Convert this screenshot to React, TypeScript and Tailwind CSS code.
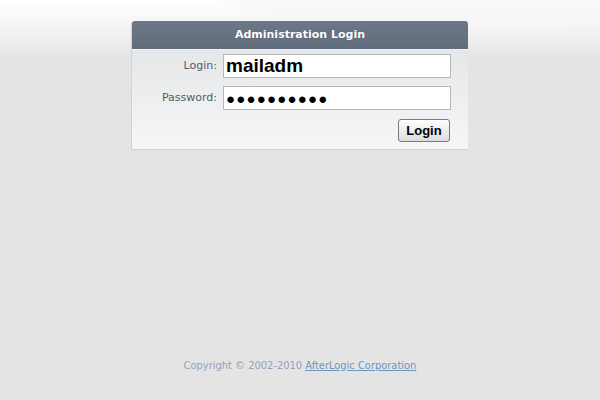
export default function App() {
  return (
    <div className="relative flex h-[400px] w-[600px] flex-col items-center overflow-hidden bg-[#e4e4e4] font-['DejaVu_Sans',sans-serif]">
      <div className="pointer-events-none absolute inset-x-0 top-0 h-[60px] bg-gradient-to-b from-white via-[#f3f3f3] to-[#e4e4e4]" />
      <div className="pointer-events-none absolute right-[-120px] top-[-70px] h-[100px] w-[520px] rounded-[50%] bg-gradient-to-b from-transparent to-[#f6f6f6] opacity-70" />

      <div className="relative mt-[21px] w-[336px] shadow-[-1px_1px_0_#d2d2d2]">
        <div className="flex h-[28px] items-center justify-center rounded-t-[3px] bg-gradient-to-b from-[#6c7788] to-[#616c7d] text-[11px] font-bold text-white [text-shadow:0_0_1px_#4a5363]">
          Administration Login
        </div>
        <div className="border-t border-[#f0f1f2] bg-gradient-to-b from-[#e6e7e9] to-[#f5f6f7] pb-[7px] pl-[24px] pr-[17px] pt-[4px]">
          <div className="flex items-center">
            <label className="w-[61px] text-right text-[11px] text-[#555b66]">Login:</label>
            <input
              type="text"
              defaultValue="mailadm"
              className="ml-[6px] h-[24px] w-[228px] border border-[#b8b8b8] bg-white px-[2px] font-['Liberation_Sans',sans-serif] text-[19px] font-bold text-black outline-none"
            />
          </div>
          <div className="mt-[8px] flex items-center">
            <label className="w-[61px] text-right text-[11px] text-[#555b66]">Password:</label>
            <input
              type="text"
              readOnly
              defaultValue="●●●●●●●●●●"
              className="ml-[6px] h-[24px] w-[228px] border border-[#b8b8b8] bg-white px-[2px] font-['Liberation_Sans',sans-serif] text-[15px] font-bold tracking-[1.2px] text-black outline-none"
            />
          </div>
          <div className="mt-[9px] flex justify-end">
            <button className="mr-[1px] h-[23px] w-[52px] rounded-[3px] border border-[#7a7a7a] bg-gradient-to-b from-white to-[#dcdcdc] font-['Liberation_Sans',sans-serif] text-[13px] font-bold text-black">
              Login
            </button>
          </div>
        </div>
      </div>

      <div className="flex-1" />
      <div className="relative mb-[26px] font-['DejaVu_Sans_Condensed','DejaVu_Sans',sans-serif] text-[11px] text-[#94a0b8]">
        Copyright © 2002-2010{' '}
        <a href="#" className="text-[#6f95bd] underline">
          AfterLogic Corporation
        </a>
      </div>
    </div>
  );
}
